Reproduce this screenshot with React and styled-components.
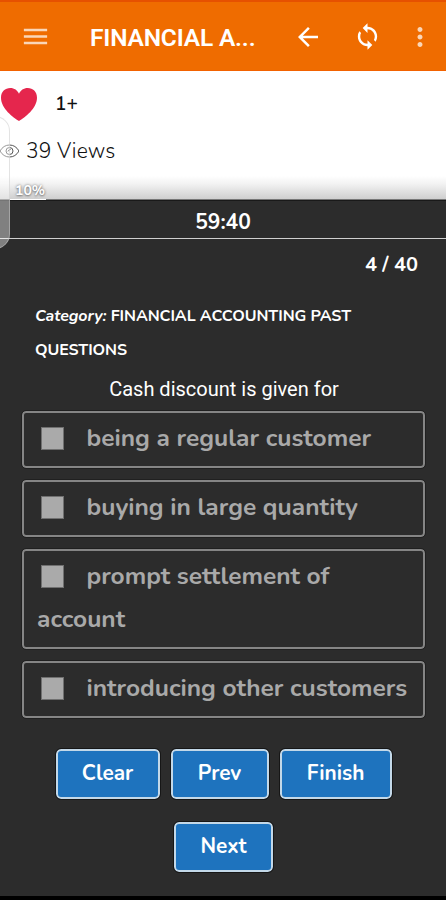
import React from "react";
import styled, { createGlobalStyle } from "styled-components";
import { MdArrowBack, MdMenu, MdMoreVert, MdSync } from "react-icons/md";

const GlobalStyle = createGlobalStyle`
  * {
    box-sizing: border-box;
  }
  body {
    margin: 0;
    background: #2c2c2c;
    font-family: "Nunito", "Open Sans", sans-serif;
  }
`;

const Page = styled.div`
  position: relative;
  display: flex;
  flex-direction: column;
  width: 446px;
  height: 900px;
  overflow: hidden;
  background: #2c2c2c;
`;

const TopBar = styled.header`
  display: flex;
  align-items: center;
  flex: none;
  height: 71px;
  padding: 1px 11px 0 20px;
  background: #ef6c00;
  border-top: 2px solid #e65100;
  border-bottom: 1px solid #f26200;
  color: #fff;
`;

const IconButton = styled.button`
  display: flex;
  flex: none;
  padding: 0;
  margin-left: ${(props) => props.$gap || 0}px;
  border: 0;
  background: none;
  color: #fff;
  opacity: ${(props) => (props.$faded ? 0.72 : 1)};
`;

const Title = styled.h1`
  width: 168px;
  margin: 3px 0 0 39px;
  font: 600 24.5px/32px Roboto, sans-serif;
  letter-spacing: -0.18px;
  white-space: nowrap;
`;

const Stats = styled.section`
  display: flex;
  flex-direction: column;
  flex: none;
  height: 129px;
  padding-top: 17px;
  color: #111;
  background: linear-gradient(#fff 0 105px, #f2f2f2 113px, #cfcfcf 128px);
`;

const Likes = styled.div`
  display: flex;
  align-items: center;
  gap: 18px;
  height: 32px;
  padding-left: 1px;
  font-size: 19px;
  font-weight: 600;
`;

const Views = styled.div`
  display: flex;
  align-items: center;
  gap: 7px;
  height: 30px;
  margin-top: 16px;
  font-size: 21px;
  letter-spacing: 0.2px;
  font-weight: 300;
`;

const Handle = styled.div`
  position: absolute;
  top: 116px;
  left: -22px;
  width: 32px;
  height: 133px;
  border: 1px solid rgba(200, 200, 200, 0.5);
  border-radius: 15px;
  background: rgba(255, 255, 255, 0.4);
`;

const Progress = styled.div`
  position: absolute;
  top: 183px;
  left: 10px;
  width: 36px;
  height: 17px;
  padding-left: 5px;
  border-bottom: 1px solid #fff;
  color: #fff;
  font-size: 14px;
  font-weight: 700;
  line-height: 16px;
  text-shadow: 0 0 3px #777, 0 1px 2px #888;
`;

const Timer = styled.div`
  flex: none;
  height: 39px;
  border-top: 1px solid #191919;
  border-bottom: 1px solid #d0d0d0;
  box-shadow: 0 -1px 0 #777;
  color: #fff;
  font-size: 21px;
  font-weight: 700;
  line-height: 43px;
  text-align: center;
`;

const Quiz = styled.main`
  display: flex;
  flex-direction: column;
  flex: 1;
  padding: 0 21px 0 22px;
  border-bottom: 4px solid #000;
  color: #fff;
`;

const Counter = styled.div`
  height: 61px;
  padding: 12px 7px 0 0;
  font-size: 20px;
  font-weight: 700;
  line-height: 28px;
  text-align: right;
`;

const Category = styled.div`
  height: 67px;
  padding-left: 13px;
  font-size: 16px;
  font-weight: 700;
  line-height: 33.5px;
  letter-spacing: -0.08px;
`;

const Question = styled.p`
  height: 44px;
  margin: 0;
  padding: 7px 0 0 1px;
  font: 400 20px/30px Roboto, sans-serif;
  text-align: center;
`;

const Options = styled.div`
  display: flex;
  flex-direction: column;
  gap: 12px;
`;

const Option = styled.label`
  display: block;
  padding: 4px 8px 6px 13px;
  border: 2px solid #858585;
  border-radius: 4px;
  outline: 1px solid #202020;
  color: #a9a9a9;
  font-size: 24.5px;
  font-weight: 700;
  line-height: 43px;
`;

const Box = styled.span`
  display: inline-block;
  width: 23px;
  height: 23px;
  margin: 0 23px 0 3.5px;
  border: 1px solid #707070;
  background: #aaa;
  vertical-align: -4px;
`;

const Actions = styled.div`
  display: flex;
  flex-wrap: wrap;
  justify-content: center;
  gap: 23px 11px;
  margin-top: 31px;
`;

const Action = styled.button`
  width: ${(props) => props.$width}px;
  height: 50px;
  padding: 0 0 2px;
  border: 2px solid #c3d8e8;
  border-radius: 5px;
  outline: 1px solid #161616;
  background: #1e73be;
  color: #fff;
  font: 700 20.8px "Nunito", "Open Sans", sans-serif;
`;

const options = [
  "being a regular customer",
  "buying in large quantity",
  "prompt settlement of account",
  "introducing other customers",
];

const actions = [
  { label: "Clear", width: 104 },
  { label: "Prev", width: 98 },
  { label: "Finish", width: 112 },
  { label: "Next", width: 99 },
];

const Heart = () => (
  <svg width="36" height="33" viewBox="0 0 35 33" preserveAspectRatio="none">
    <path
      d="M17.5 33C12 29.5 0 20.5 0 9.7 0 3.5 4 0 9 0c4 0 7 2.4 8.5 5.8C19 2.4 22 0 26 0c5 0 9 3.5 9 9.7C35 20.5 23 29.5 17.5 33z"
      fill="#e5264d"
    />
  </svg>
);

const Eye = () => (
  <svg width="19" height="14" viewBox="0 0 19 14" fill="none" stroke="#555">
    <path d="M0 7Q3.5 1 9.5 1T19 7Q15.5 13 9.5 13T0 7z" />
    <circle cx="9.5" cy="7" r="3.5" />
    <path d="M8 7.5Q8.5 5.5 10.5 5.5" />
  </svg>
);

const App = () => {
  return (
    <Page>
      <GlobalStyle />
      <TopBar>
        <IconButton $faded aria-label="Menu">
          <MdMenu size={31} />
        </IconButton>
        <Title>FINANCIAL A...</Title>
        <IconButton $gap={36} aria-label="Back">
          <MdArrowBack size={30} />
        </IconButton>
        <IconButton $gap={30} aria-label="Refresh">
          <MdSync size={29} />
        </IconButton>
        <IconButton $gap={23} $faded aria-label="More">
          <MdMoreVert size={30} />
        </IconButton>
      </TopBar>
      <Stats>
        <Likes>
          <Heart />
          <span>1+</span>
        </Likes>
        <Views>
          <Eye />
          <span>39 Views</span>
        </Views>
      </Stats>
      <Timer>59:40</Timer>
      <Quiz>
        <Counter>4 / 40</Counter>
        <Category>
          <em>Category:</em> FINANCIAL ACCOUNTING PAST QUESTIONS
        </Category>
        <Question>Cash discount is given for</Question>
        <Options>
          {options.map((option) => (
            <Option key={option}>
              <Box />
              {option}
            </Option>
          ))}
        </Options>
        <Actions>
          {actions.map((action) => (
            <Action key={action.label} $width={action.width}>
              {action.label}
            </Action>
          ))}
        </Actions>
      </Quiz>
      <Handle />
      <Progress>10%</Progress>
    </Page>
  );
};

export default App;
